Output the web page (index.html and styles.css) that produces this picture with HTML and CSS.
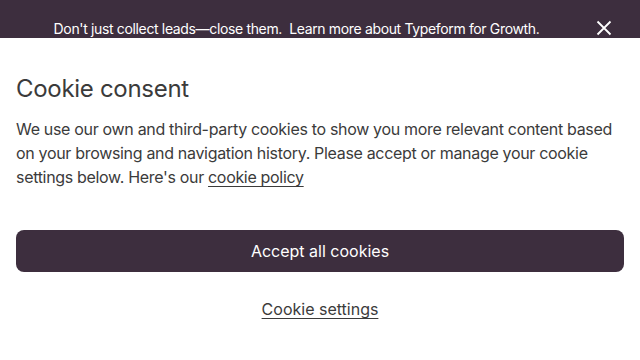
FILE: index.html
```html
<!DOCTYPE html>
<html lang="en">
<head>
<meta charset="utf-8">
<link rel="stylesheet" href="styles.css">
</head>
<body>
<div class="banner">
  <p class="banner-text">Don't just collect leads—close them.&nbsp; Learn more about Typeform for Growth.</p>
  <button class="close" aria-label="Close">
    <svg width="16" height="16" viewBox="0 0 16 16"><path d="M1.5 1.5 L14.5 14.5 M14.5 1.5 L1.5 14.5" stroke="#fff" stroke-width="1.8" fill="none"/></svg>
  </button>
</div>
<main class="consent">
  <h1 class="title">Cookie consent</h1>
  <p class="desc">We use our own and third-party cookies to show you more relevant content based on your browsing and navigation history. Please accept or manage your cookie settings below. Here's our <a href="#" class="link">cookie policy</a></p>
  <button class="accept">Accept all cookies</button>
  <div class="settings-row"><a href="#" class="settings">Cookie settings</a></div>
</main>
</body>
</html>
```
FILE: styles.css
```css
* { box-sizing: border-box; }
html, body { margin: 0; padding: 0; background: #fff; }
body { font-family: Inter, "Noto Sans", sans-serif; color: #3b3b3b; }
.banner {
  height: 38px;
  background: #3d2e3e;
  display: flex;
  align-items: flex-end;
  justify-content: center;
  position: relative;
}
.banner-text {
  margin: 0 0 0 -47px;
  color: #fff;
  font-size: 14px;
  line-height: 20px;
  letter-spacing: -0.35px;
  position: relative;
  top: 1px;
}
.close {
  position: absolute;
  right: 28px;
  top: 20px;
  background: none;
  border: 0;
  padding: 0;
  width: 16px;
  height: 16px;
  display: flex;
}
.consent { padding: 0 16px; }
.title {
  margin: 0;
  padding-top: 35px;
  font-size: 24px;
  line-height: 32px;
  font-weight: 400;
  color: #3b3b3b;
  letter-spacing: -0.3px;
}
.desc {
  margin: 12px 0 0;
  font-size: 16px;
  line-height: 24px;
  color: #3b3b3b;
  letter-spacing: -0.32px;
}
.link { color: #3b3b3b; text-decoration: underline; text-underline-offset: 3px; }
.accept {
  display: block;
  width: 100%;
  margin-top: 41px;
  height: 42px;
  border: 0;
  border-radius: 8px;
  background: #3d2e3e;
  color: #fff;
  font-family: inherit;
  font-size: 16px;
}
.settings-row { text-align: center; margin-top: 25px; }
.settings { color: #3b3b3b; font-size: 16px; line-height: 24px; text-underline-offset: 3px; }
```
